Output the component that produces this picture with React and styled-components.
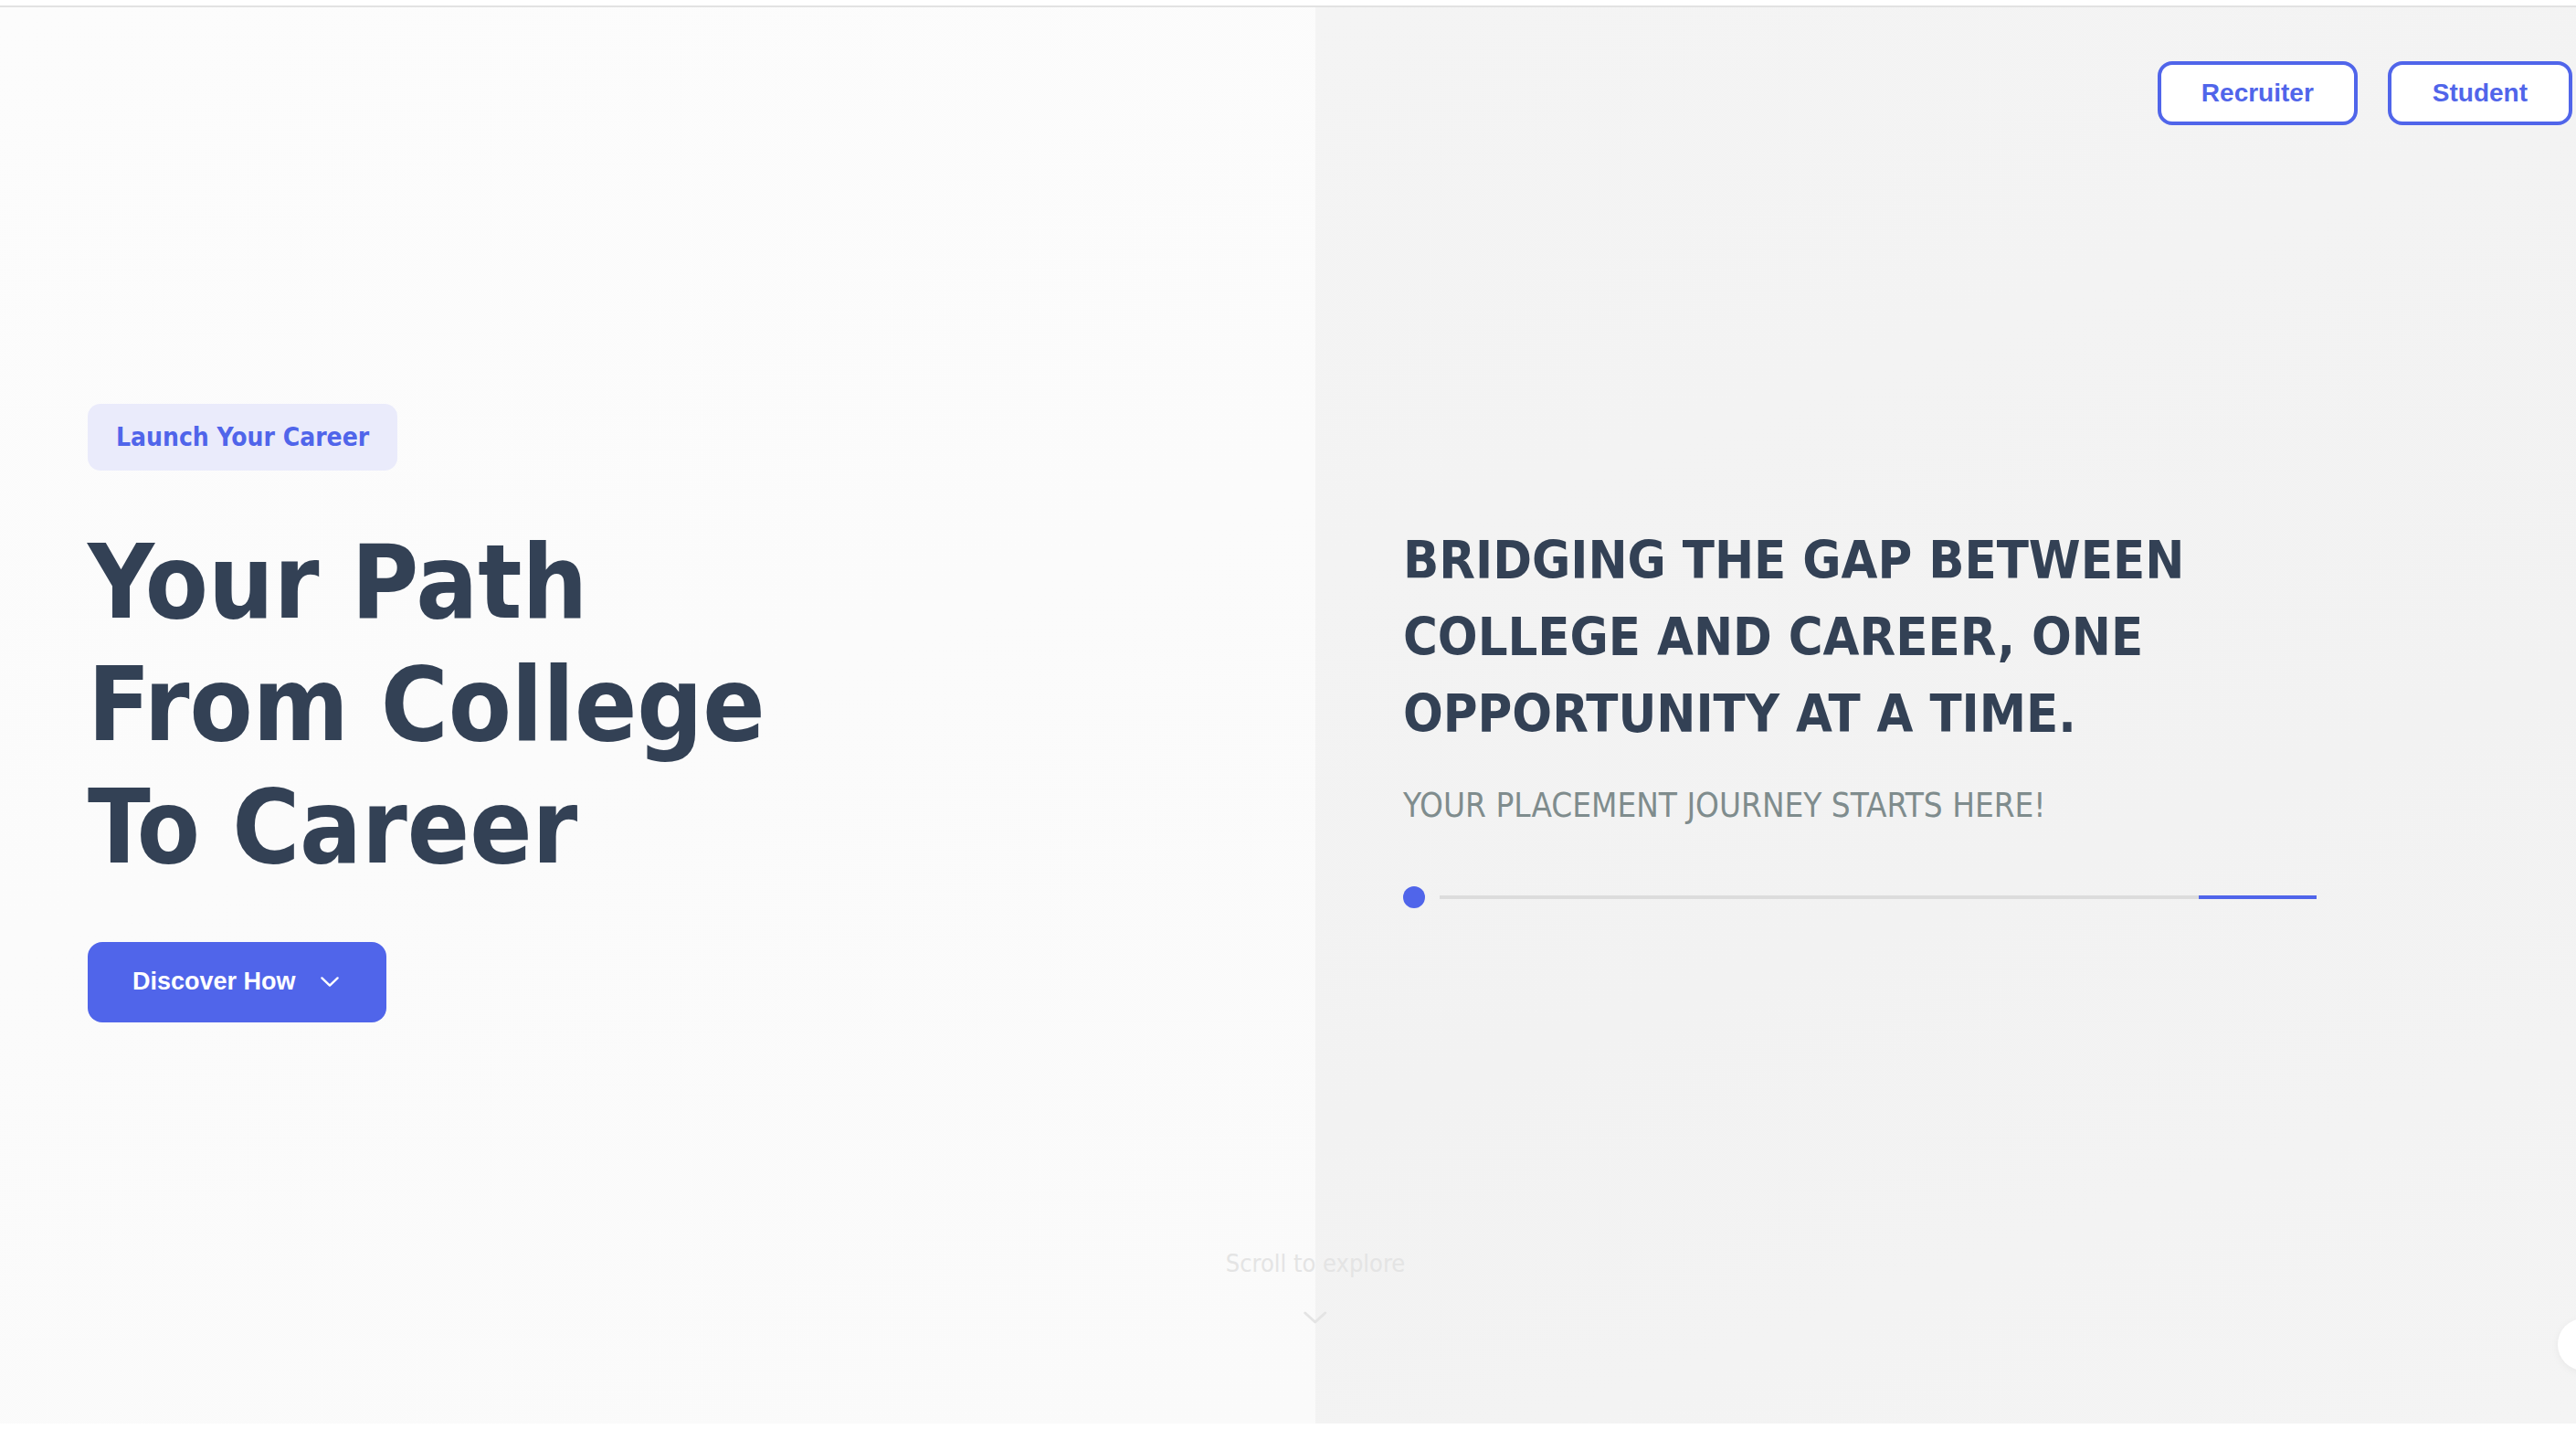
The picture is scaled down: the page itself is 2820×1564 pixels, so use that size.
import React from "react";
import styled, { createGlobalStyle } from "styled-components";

const GlobalStyle = createGlobalStyle`
  html, body {
    margin: 0;
    padding: 0;
    background: #ffffff;
    overflow: hidden;
  }
  * {
    box-sizing: border-box;
  }
`;

const BLUE = "#5065ea";
const INK = "#334155";
const CONDENSED = `"DejaVu Sans Condensed", "DejaVu Sans", sans-serif`;

// LAYOUT
const Page = styled.div`
  padding-top: 6px;
  width: 2820px;
  height: 1564px;
`;

const Hero = styled.section`
  position: relative;
  display: grid;
  grid-template-columns: 1440px 1fr;
  height: 1552px;
  border-top: 2px solid #e2e2e2;
  overflow: hidden;
`;

const Panel = styled.div`
  display: flex;
  align-items: center;
  padding-left: 96px;
  padding-bottom: ${(p) => (p.$tone === "dark" ? 0 : 6)}px;
  background: ${(p) =>
    p.$tone === "dark"
      ? "linear-gradient(160deg, #f4f4f4 0%, #f2f2f2 60%, #f4f4f4 100%)"
      : "linear-gradient(160deg, #fcfcfc 0%, #fafafa 100%)"};
`;

const Column = styled.div`
  display: flex;
  flex-direction: column;
  align-items: flex-start;
`;

// LEFT SIDE
const Badge = styled.span`
  display: inline-flex;
  align-items: center;
  height: 73px;
  padding: 0 31px;
  border-radius: 14px;
  background: #eaebfb;
  color: ${BLUE};
  font-family: ${CONDENSED};
  font-stretch: condensed;
  font-weight: 700;
  font-size: 28px;
`;

const Title = styled.h1`
  margin: 55px 0 0;
  color: ${INK};
  font-family: ${CONDENSED};
  font-stretch: condensed;
  font-weight: 700;
  font-size: 112px;
  line-height: 134px;
`;

const PrimaryButton = styled.button`
  display: inline-flex;
  align-items: center;
  gap: 26px;
  height: 88px;
  margin-top: 59px;
  padding: 0 51px 0 49px;
  border: none;
  border-radius: 16px;
  background: ${BLUE};
  color: #ffffff;
  font-family: "Liberation Sans", Arial, sans-serif;
  font-weight: 700;
  font-size: 27px;
  cursor: pointer;
`;

// RIGHT SIDE
const Nav = styled.nav`
  position: absolute;
  top: 59px;
  right: 4px;
  display: flex;
  gap: 33px;
`;

const NavButton = styled.button`
  height: 70px;
  padding: 0 ${(p) => (p.$wide ? 44 : 45)}px;
  border: 4px solid ${BLUE};
  border-radius: 16px;
  background: #ffffff;
  color: ${BLUE};
  font-family: "Liberation Sans", Arial, sans-serif;
  font-weight: 700;
  font-size: 28px;
  cursor: pointer;
`;

const Tagline = styled.h2`
  margin: 0;
  color: ${INK};
  font-family: ${CONDENSED};
  font-stretch: condensed;
  font-weight: 700;
  font-size: 57.3px;
  line-height: 84px;
  text-transform: uppercase;
`;

const Subline = styled.p`
  margin: 36px 0 0;
  color: #7f8c8d;
  font-family: ${CONDENSED};
  font-stretch: condensed;
  font-weight: 400;
  font-size: 36.6px;
  line-height: 43px;
  text-transform: uppercase;
`;

const Progress = styled.div`
  display: flex;
  align-items: center;
  gap: 16px;
  width: 1000px;
  margin-top: 67px;
`;

const Dot = styled.span`
  width: 24px;
  height: 24px;
  border-radius: 50%;
  background: ${BLUE};
  flex: none;
`;

const Track = styled.div`
  display: flex;
  flex: 1;
  height: 4px;
`;

const TrackPart = styled.span`
  height: 100%;
  background: ${(p) => (p.$active ? BLUE : "#dcdcdc")};
  flex: ${(p) => (p.$active ? "0 0 129px" : "1")};
`;

// OVERLAYS
const ScrollHint = styled.div`
  position: absolute;
  left: 1440px;
  bottom: 108px;
  transform: translateX(-50%);
  display: flex;
  flex-direction: column;
  align-items: center;
  gap: 35px;
  color: #e4e4e4;
  font-family: ${CONDENSED};
  font-stretch: condensed;
  font-size: 27px;
  line-height: 33px;
  white-space: nowrap;
`;

const FloatingCircle = styled.button`
  position: absolute;
  right: -37px;
  bottom: 58px;
  width: 57px;
  height: 57px;
  border: none;
  border-radius: 50%;
  background: #ffffff;
  box-shadow: 0 2px 10px rgba(0, 0, 0, 0.05);
`;

const Chevron = ({ width, height, color, stroke }) => (
  <svg width={width} height={height} viewBox={`0 0 ${width} ${height}`} fill="none">
    <path
      d={`M${stroke} ${stroke} L${width / 2} ${height - stroke} L${width - stroke} ${stroke}`}
      stroke={color}
      strokeWidth={stroke}
      strokeLinecap="round"
      strokeLinejoin="round"
    />
  </svg>
);

const App = () => {
  return (
    <Page>
      <GlobalStyle />
      <Hero>
        <Panel>
          <Column>
            <Badge>Launch Your Career</Badge>
            <Title>
              Your Path
              <br />
              From College
              <br />
              To Career
            </Title>
            <PrimaryButton type="button">
              Discover How
              <Chevron width={22} height={13} color="#ffffff" stroke={2.4} />
            </PrimaryButton>
          </Column>
        </Panel>

        <Panel $tone="dark">
          <Column>
            <Tagline>
              Bridging the gap between
              <br />
              college and career, one
              <br />
              opportunity at a time.
            </Tagline>
            <Subline>Your placement journey starts here!</Subline>
            <Progress>
              <Dot />
              <Track>
                <TrackPart />
                <TrackPart $active />
              </Track>
            </Progress>
          </Column>
        </Panel>

        <Nav>
          <NavButton type="button" $wide>
            Recruiter
          </NavButton>
          <NavButton type="button">Student</NavButton>
        </Nav>

        <ScrollHint>
          Scroll to explore
          <Chevron width={28} height={16} color="#e4e4e4" stroke={3} />
        </ScrollHint>

        <FloatingCircle type="button" aria-label="help" />
      </Hero>
    </Page>
  );
};

export default App;
